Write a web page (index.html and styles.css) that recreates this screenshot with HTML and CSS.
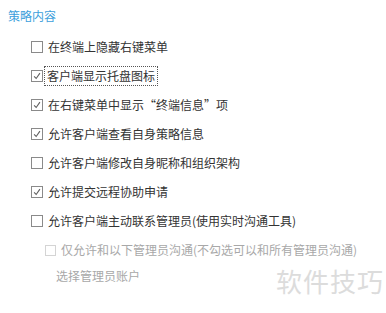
FILE: index.html
```html
<!DOCTYPE html>
<html>
<head>
<meta charset="utf-8">
<link rel="stylesheet" href="styles.css">
</head>
<body>
<div class="page">
  <div class="title">策略内容</div>
  <ul class="list">
    <li class="row"><span class="box"></span><span class="label">在终端上隐藏右键菜单</span></li>
    <li class="row"><span class="box checked"><svg viewBox="0 0 12 12"><path d="M2.5 6.5 L5 9 L9.5 2.5"/></svg></span><span class="label focus">客户端显示托盘图标</span></li>
    <li class="row"><span class="box checked"><svg viewBox="0 0 12 12"><path d="M2.5 6.5 L5 9 L9.5 2.5"/></svg></span><span class="label">在右键菜单中显示“终端信息”项</span></li>
    <li class="row"><span class="box checked"><svg viewBox="0 0 12 12"><path d="M2.5 6.5 L5 9 L9.5 2.5"/></svg></span><span class="label">允许客户端查看自身策略信息</span></li>
    <li class="row"><span class="box"></span><span class="label">允许客户端修改自身昵称和组织架构</span></li>
    <li class="row"><span class="box checked"><svg viewBox="0 0 12 12"><path d="M2.5 6.5 L5 9 L9.5 2.5"/></svg></span><span class="label">允许提交远程协助申请</span></li>
    <li class="row"><span class="box"></span><span class="label">允许客户端主动联系管理员(使用实时沟通工具)</span></li>
    <li class="row sub disabled"><span class="box small"></span><span class="label">仅允许和以下管理员沟通(不勾选可以和所有管理员沟通)</span></li>
    <li class="row subtext disabled"><span class="label">选择管理员账户</span></li>
  </ul>
  <div class="watermark">软件技巧</div>
</div>
</body>
</html>
```
FILE: styles.css
```css
html, body {
  margin: 0;
  padding: 0;
  background: #ffffff;
}
.page {
  position: relative;
  width: 386px;
  height: 313px;
  padding-top: 6px;
  box-sizing: border-box;
  font-family: "Noto Sans CJK SC", "Noto Sans", sans-serif;
  font-size: 12px;
  color: #333333;
}
.title {
  padding-left: 8px;
  line-height: 20px;
  color: #3d9fdc;
}
.list {
  list-style: none;
  margin: 6px 0 0 0;
  padding: 0 0 0 31px;
}
.row {
  display: flex;
  align-items: center;
  height: 29px;
  gap: 5px;
}
.box {
  width: 12px;
  height: 12px;
  box-sizing: border-box;
  border: 1px solid #8a8a8a;
  background: #fff;
  flex: none;
  display: flex;
  align-items: center;
  justify-content: center;
}
.box svg {
  width: 10px;
  height: 10px;
  fill: none;
  stroke: #606060;
  stroke-width: 1.3;
}
.label {
  line-height: 16px;
  white-space: nowrap;
}
.label.focus {
  outline: 1px dotted #555;
  outline-offset: 1px;
  padding: 0 1px;
  margin-left: -2px;
}
.row.sub {
  height: 30px;
  padding-left: 14px;
}
.row.sub .box {
  width: 11px;
  height: 11px;
  border-color: #d4d4d4;
}
.row.subtext {
  height: 22px;
  padding-left: 25px;
}
.disabled .label {
  color: #a8a8a8;
}
.watermark {
  position: absolute;
  left: 276px;
  top: 266px;
  font-size: 26px;
  line-height: 30px;
  color: #dcdcdc;
  letter-spacing: 1px;
}
```
